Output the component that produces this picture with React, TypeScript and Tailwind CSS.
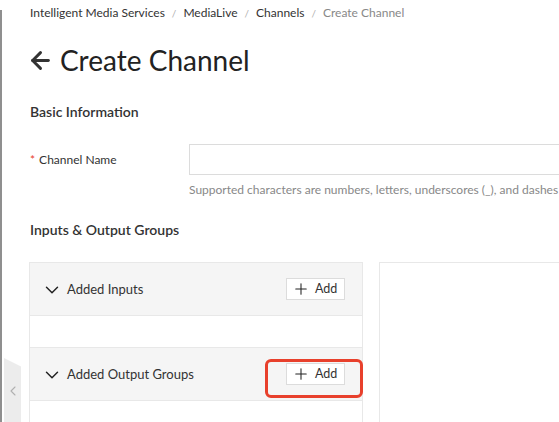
import React from 'react';
import { ChevronDown, ChevronLeft, Plus, ArrowLeft } from 'lucide-react';

const crumbs = ['Intelligent Media Services', 'MediaLive', 'Channels'];

const AddButton: React.FC = () => (
  <button className="flex items-center h-[22px] w-[59px] pl-[5px] gap-[5px] bg-white border border-[#dcdcdc] text-[12.5px] text-[#333]">
    <Plus size={18} strokeWidth={1.4} className="text-[#222]" />
    <span>Add</span>
  </button>
);

const SectionHeader: React.FC<{ title: string; highlight?: boolean }> = ({ title, highlight }) => (
  <div className="relative flex items-center justify-between h-[53px] bg-[#f5f5f5] pl-[11px] pr-[17px] border-b border-[#e8e8e8]">
    <div className="flex items-center gap-[4px] pt-[2px] text-[13px] text-[#333]">
      <ChevronDown size={22} strokeWidth={1.6} className="text-[#222]" />
      <span>{title}</span>
    </div>
    <AddButton />
    {highlight && (
      <div className="absolute left-[235px] top-[11px] w-[98px] h-[39px] border-[3px] border-[#e8402c] rounded-[6px]" />
    )}
  </div>
);

export default function App() {
  return (
    <div
      className="relative w-[559px] h-[422px] overflow-hidden bg-white text-[#333]"
      style={{ fontFamily: 'Lato, "Noto Sans", sans-serif' }}
    >
      {/* left edge of the window */}
      <div className="absolute left-0 top-[10px] bottom-0 w-[2px] bg-[#8f8f8f]" />
      {/* collapsed sidebar tab */}
      <div
        className="absolute left-[4px] top-[358px] w-[17px] h-[70px] bg-[#ececec] flex items-center justify-center"
        style={{ clipPath: 'polygon(0 0, 100% 12%, 100% 100%, 0 100%)' }}
      >
        <ChevronLeft size={16} strokeWidth={1.6} className="text-[#b0b0b0] -mt-[4px]" />
      </div>

      <div className="pl-[30px] pt-[5px]">
        <nav className="flex items-center h-[16px] text-[12px] leading-[16px]">
          {crumbs.map(c => (
            <React.Fragment key={c}>
              <span className="text-[#333]">{c}</span>
              <span className="mx-[7px] text-[#b0b0b0] text-[10px]">/</span>
            </React.Fragment>
          ))}
          <span className="text-[#888]">Create Channel</span>
        </nav>

        <h1 className="flex items-center mt-[21px] h-[36px] text-[28px] leading-[36px] text-[#222]">
          <ArrowLeft size={27} strokeWidth={2.6} className="-ml-[3px] mr-[6px] text-[#333]" />
          Create Channel
        </h1>

        <h2 className="mt-[24px] h-[20px] text-[14px] leading-[20px] font-semibold text-[#333]">Basic Information</h2>

        <div className="flex mt-[22px]">
          <label className="w-[159px] h-[31px] flex items-center text-[12px] text-[#333]">
            <span className="text-[#e8402c] mr-[4px]">*</span>Channel Name
          </label>
          <div className="flex-1 min-w-0">
            <input className="block w-[400px] h-[31px] border border-[#dcdcdc] bg-white outline-none" />
            <p className="mt-[7px] h-[16px] text-[12px] leading-[16px] text-[#888] whitespace-nowrap">
              Supported characters are numbers, letters, underscores (_), and dashes (-).
            </p>
          </div>
        </div>

        <h2 className="mt-[22px] h-[20px] text-[14px] leading-[20px] font-semibold text-[#333]">Inputs &amp; Output Groups</h2>

        <div className="flex mt-[22px] -ml-[1px] gap-[16px]">
          <div className="w-[334px] shrink-0 border border-[#e8e8e8] border-b-0">
            <SectionHeader title="Added Inputs" />
            <div className="h-[32px] bg-white border-b border-[#e8e8e8]" />
            <SectionHeader title="Added Output Groups" highlight />
            <div className="h-[40px] bg-white" />
          </div>
          <div className="w-[300px] shrink-0 h-[200px] border border-[#e8e8e8] bg-white" />
        </div>
      </div>
    </div>
  );
}
